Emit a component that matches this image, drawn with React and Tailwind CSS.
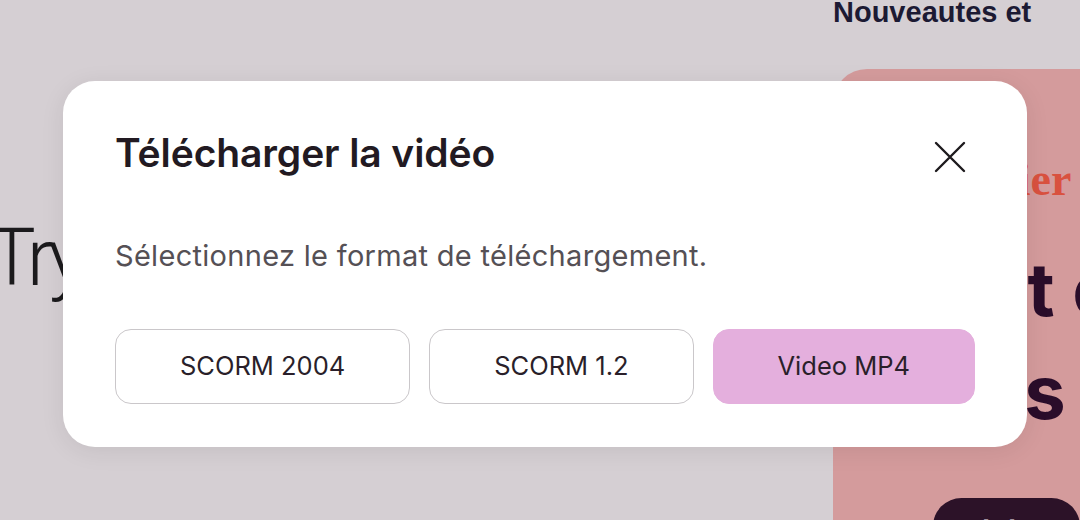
const formats = [
  { label: 'SCORM 2004', selected: false },
  { label: 'SCORM 1.2', selected: false },
  { label: 'Video MP4', selected: true },
];

function CloseIcon() {
  return (
    <svg width="32" height="32" viewBox="0 0 32 32" fill="none" stroke="currentColor" strokeWidth="2.4" strokeLinecap="round">
      <path d="M2 2L30 30M30 2L2 30" />
    </svg>
  );
}

function DownloadModal() {
  return (
    <div className="absolute inset-0 flex items-start pt-[81px] pl-[63px]">
      <div className="w-[964px] h-[366px] rounded-[32px] bg-white shadow-[0_4px_24px_rgba(0,0,0,0.08)] px-[52px] pt-[49px] pb-[43px] flex flex-col">
        <div className="flex justify-between items-start">
          <h2 className="text-[39px] leading-[46px] font-semibold text-[#221a22] tracking-[-0.1px]">
            Télécharger la vidéo
          </h2>
          <button className="mt-[11px] mr-[9px] text-[#1d1a1d]">
            <CloseIcon />
          </button>
        </div>
        <p className="mt-[62px] text-[29px] leading-[36px] tracking-[0.3px] text-[#555055]">
          Sélectionnez le format de téléchargement.
        </p>
        <div className="mt-[55px] flex gap-[19px]">
          {formats.map((f) => (
            <button
              key={f.label}
              className={
                f.selected
                  ? 'flex-auto h-[75px] rounded-[16px] bg-[#e4afdd] text-[25.5px] text-[#2a1f2a] border-[1.5px] border-[#e4afdd]'
                  : 'flex-auto h-[75px] rounded-[16px] bg-white text-[25.5px] text-[#2a1f2a] border-[1.5px] border-[#cac7ca]'
              }
            >
              {f.label}
            </button>
          ))}
        </div>
      </div>
    </div>
  );
}

export default function App() {
  return (
    <div
      className="relative w-[1080px] h-[520px] overflow-hidden bg-[#d5cfd3] flex"
      style={{ fontFamily: 'Inter, "Noto Sans", sans-serif' }}
    >
      <div className="flex-1 overflow-hidden">
        <div
          className="mt-[218px] -ml-[12px] text-[80px] leading-none font-light tracking-[-6px] text-[#1b1a1c] whitespace-nowrap"
          style={{ fontFamily: 'Roboto, sans-serif' }}
        >
          Try it for free
        </div>
      </div>

      <div className="w-[247px] flex flex-col">
        <h3
          className="-mt-[2px] text-[29px] leading-none font-bold text-[#1c1a33] whitespace-nowrap"
          style={{ fontFamily: '"Liberation Sans", Arial, sans-serif' }}
        >
          Nouveautes et
        </h3>
        <div className="mt-[42px] flex-1 rounded-tl-[34px] bg-[#d49b9c] overflow-hidden flex flex-col">
          <div
            className="mt-[88px] ml-[103px] text-[46px] leading-[46px] font-bold text-[#d9513f] whitespace-nowrap"
            style={{ fontFamily: '"Liberation Serif", serif' }}
          >
            Atelier
          </div>
          <div className="mt-[49px] ml-[109px] text-[74px] leading-[74px] font-bold text-[#2a0d2a] whitespace-nowrap">
            est conçu
          </div>
          <div className="mt-[29px] ml-[127px] text-[74px] leading-[74px] font-bold text-[#2a0d2a] whitespace-nowrap">
            les vidéos
          </div>
          <div className="mt-[69px] ml-[100px] h-[64px] rounded-full bg-[#2c1228] px-[24px] pt-[12px] text-[30px] font-bold text-[#f3e7f0] whitespace-nowrap">
            Télécharger
          </div>
        </div>
      </div>

      <DownloadModal />
    </div>
  );
}
